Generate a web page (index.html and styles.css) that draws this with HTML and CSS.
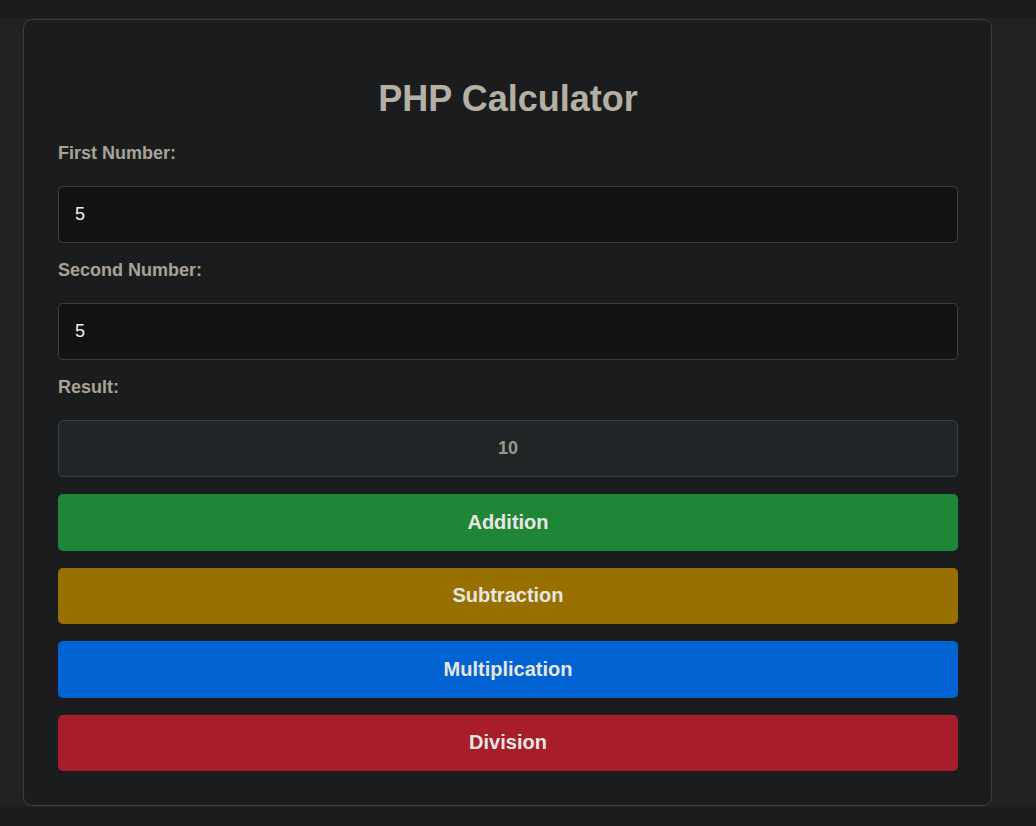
FILE: index.html
```html
<!DOCTYPE html>
<html lang="en">
<head>
<meta charset="utf-8">
<title>PHP Calculator</title>
<link rel="stylesheet" href="styles.css">
</head>
<body>
<div class="card">
  <h1 class="title">PHP Calculator</h1>
  <form class="form">
    <div class="group">
      <label class="label" for="n1">First Number:</label>
      <input class="field" id="n1" type="text" value="5">
    </div>
    <div class="group">
      <label class="label" for="n2">Second Number:</label>
      <input class="field" id="n2" type="text" value="5">
    </div>
    <div class="group">
      <label class="label">Result:</label>
      <div class="result">10</div>
    </div>
    <div class="buttons">
      <button type="button" class="btn btn-add">Addition</button>
      <button type="button" class="btn btn-sub">Subtraction</button>
      <button type="button" class="btn btn-mul">Multiplication</button>
      <button type="button" class="btn btn-div">Division</button>
    </div>
  </form>
</div>
</body>
</html>
```
FILE: styles.css
```css
html {
  background: #1b1c1e;
}
body {
  margin: 18px 0 19px;
  padding: 1px 0 1px 23px;
  background: #202224;
  font-family: "Liberation Sans", Arial, sans-serif;
}
.card {
  box-sizing: border-box;
  width: 969px;
  padding: 0 33px 34px 34px;
  background: #1b1c1e;
  border: 1px solid #3b3e41;
  border-radius: 9px;
}
.title {
  margin: 58px 0 24px;
  text-align: center;
  font-size: 36px;
  line-height: 41px;
  font-weight: bold;
  color: #b6afa5;
}
.form {
  display: flex;
  flex-direction: column;
}
.group {
  display: flex;
  flex-direction: column;
  margin-bottom: 17px;
}
.label {
  font-size: 18px;
  line-height: 21px;
  font-weight: bold;
  color: #a9a297;
  margin-bottom: 22px;
}
.field {
  box-sizing: border-box;
  height: 57px;
  margin: 0;
  padding: 0 16px;
  background: #131313;
  border: 1px solid #3b3e41;
  border-radius: 5px;
  color: #f2f0ed;
  font-family: "Liberation Sans", Arial, sans-serif;
  font-size: 18px;
}
.result {
  box-sizing: border-box;
  height: 57px;
  display: flex;
  align-items: center;
  justify-content: center;
  background: #222527;
  border: 1px solid #3b3e41;
  border-radius: 5px;
  color: #9e978d;
  font-size: 18px;
  font-weight: bold;
}
.buttons {
  display: flex;
  flex-direction: column;
  gap: 17px;
}
.btn {
  height: 56.5px;
  border: none;
  border-radius: 5px;
  color: #e8e6e3;
  font-family: "Liberation Sans", Arial, sans-serif;
  font-size: 20px;
  font-weight: bold;
  cursor: pointer;
}
.btn-add { background: #208637; }
.btn-sub { background: #987000; }
.btn-mul { background: #0063d1; }
.btn-div { background: #a71d2a; }
```
